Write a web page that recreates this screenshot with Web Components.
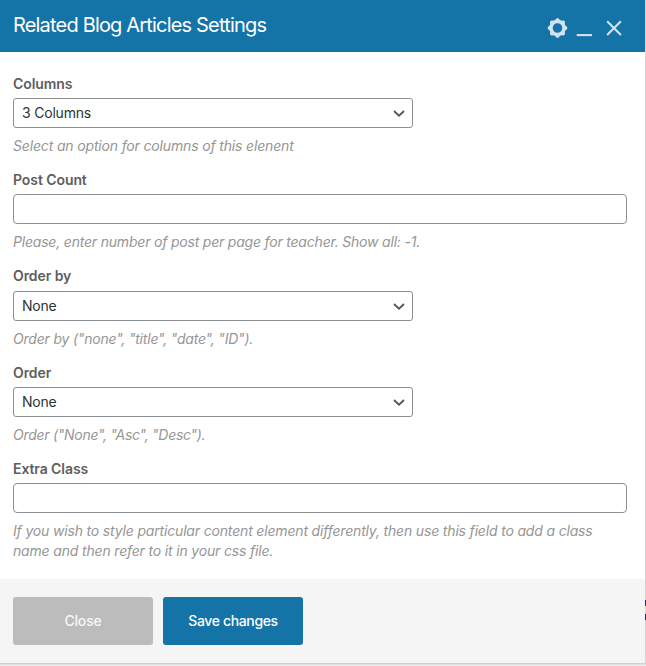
<!DOCTYPE html>
<html lang="en">
<head>
<meta charset="utf-8">
<title>Related Blog Articles Settings</title>
<style>
html,body{margin:0;height:666px;overflow:hidden;background:#e9e9e9}
body{font-family:Inter,"Liberation Sans",sans-serif;font-size:14px;line-height:20px;color:#5e5e5e}
</style>
</head>
<body>
<settings-dialog>
  <dialog-header slot="header">Related Blog Articles Settings</dialog-header>
  <form-field style="--hint-ls:-.16px"><span slot="label">Columns</span><select-box>3 Columns</select-box><span slot="hint">Select an option for columns of this elenent</span></form-field>
  <form-field><span slot="label">Post Count</span><text-box></text-box><span slot="hint">Please, enter number of post per page for teacher. Show all: -1.</span></form-field>
  <form-field><span slot="label">Order by</span><select-box>None</select-box><span slot="hint">Order by ("none", "title", "date", "ID").</span></form-field>
  <form-field style="--hint-ls:-.28px"><span slot="label">Order</span><select-box>None</select-box><span slot="hint">Order ("None", "Asc", "Desc").</span></form-field>
  <form-field style="--hint-ls:-.17px"><span slot="label">Extra Class</span><text-box></text-box><span slot="hint">If you wish to style particular content element differently, then use this field to add a class<br>name and then refer to it in your css file.</span></form-field>
  <action-button slot="footer">Close</action-button>
  <action-button slot="footer" primary>Save changes</action-button>
</settings-dialog>
<script>
const define = (name, html) => customElements.define(name, class extends HTMLElement {
  constructor() {
    super();
    this.attachShadow({mode: 'open'}).innerHTML = html;
  }
});
define('settings-dialog', `<style>
:host{display:grid;grid-template-columns:645px 1px;grid-template-rows:663px 3px;width:646px;height:666px;background:#fff}
.panel{display:flex;flex-direction:column;background:#fff}
main{display:flex;flex-direction:column;gap:14.03px;height:527px;padding:21.7px 18px 0 13px;box-sizing:border-box}
footer{display:flex;gap:10px;padding:18px 13px;background:#f5f5f5}
.edge{background:#d4d4d4;display:flex;flex-direction:column;align-items:stretch;padding-top:600px;box-sizing:border-box;gap:8px}
.edge i{height:6px;background:#2c2c4c}
.shade{grid-column:1/3;background:linear-gradient(#cfcfcf 0 1px,#e1e1e1 1px 2px,#ececec 2px)}
</style><div class="panel"><slot name="header"></slot><main><slot></slot></main><footer><slot name="footer"></slot></footer></div><div class="edge"><i></i><i></i></div><div class="shade"></div>`);
define('dialog-header', `<style>
:host{display:flex;height:52px;flex:none;justify-content:space-between;background:#1474a8;color:#fff;padding:0 20px 0 13px;font-size:20px;line-height:51px;letter-spacing:-.82px}
nav{display:flex;padding-top:16px}
svg{display:block;fill:none;stroke:#d0e3ee}
</style><span><slot></slot></span><nav><svg width="80" height="24" viewBox="545 16 80 24">
<circle cx="557.5" cy="28" r="6.5" stroke-width="3.4"/>
<g stroke="none" fill="#d0e3ee"><path id="teeth" d="M554.4 20.8L556.6 18.3H558.4L560.6 20.8ZM554.4 35.2L556.6 37.7H558.4L560.6 35.2ZM550.3 24.9L547.8 27.1V28.9L550.3 31.1ZM564.7 24.9L567.2 27.1V28.9L564.7 31.1Z"/>
<path transform="rotate(45 557.5 28)" d="M554.4 20.8L556.6 18.3H558.4L560.6 20.8ZM554.4 35.2L556.6 37.7H558.4L560.6 35.2ZM550.3 24.9L547.8 27.1V28.9L550.3 31.1ZM564.7 24.9L567.2 27.1V28.9L564.7 31.1Z"/></g>
<path d="M576.7 35.1h15.3" stroke-width="2.1"/><path d="M607.1 21.2l13.8 13.8m0-13.8l-13.8 13.8" stroke-width="2.1"/></svg></nav>`);
define('form-field', `<style>
:host{display:block}
.label{font-weight:600;line-height:20px;height:24.3px;letter-spacing:-.08px}
.hint{font-style:italic;color:#969696;padding-top:8px;line-height:20px;letter-spacing:var(--hint-ls,-.2px)}
</style><div class="label"><slot name="label"></slot></div><slot></slot><div class="hint"><slot name="hint"></slot></div>`);
define('select-box', `<style>
:host{display:flex;width:400px;height:30px;box-sizing:border-box;border:1px solid #8c8f94;border-radius:3px;align-items:center;justify-content:space-between;padding:0 7px 0 8px;color:#2c3338;background:#fff;letter-spacing:-.2px}
svg{fill:none;stroke:#555;stroke-width:1.8}
</style><span><slot></slot></span><svg width="12" height="8" viewBox="0 0 12 8"><path d="M1 2l5 4.7 5-4.7"/></svg>`);
define('text-box', `<style>
:host{display:block;height:30px;box-sizing:border-box;border:1px solid #8c8f94;border-radius:4px;background:#fff}
</style>`);
define('action-button', `<style>
:host{display:flex;width:140px;height:48px;border-radius:3px;align-items:center;justify-content:center;background:#bcbcbc;color:#f7f7f7;letter-spacing:-.18px;font-weight:500}
:host([primary]){background:#1474a8;color:#fff;letter-spacing:-.36px}
</style><slot></slot>`);
</script>
</body>
</html>
